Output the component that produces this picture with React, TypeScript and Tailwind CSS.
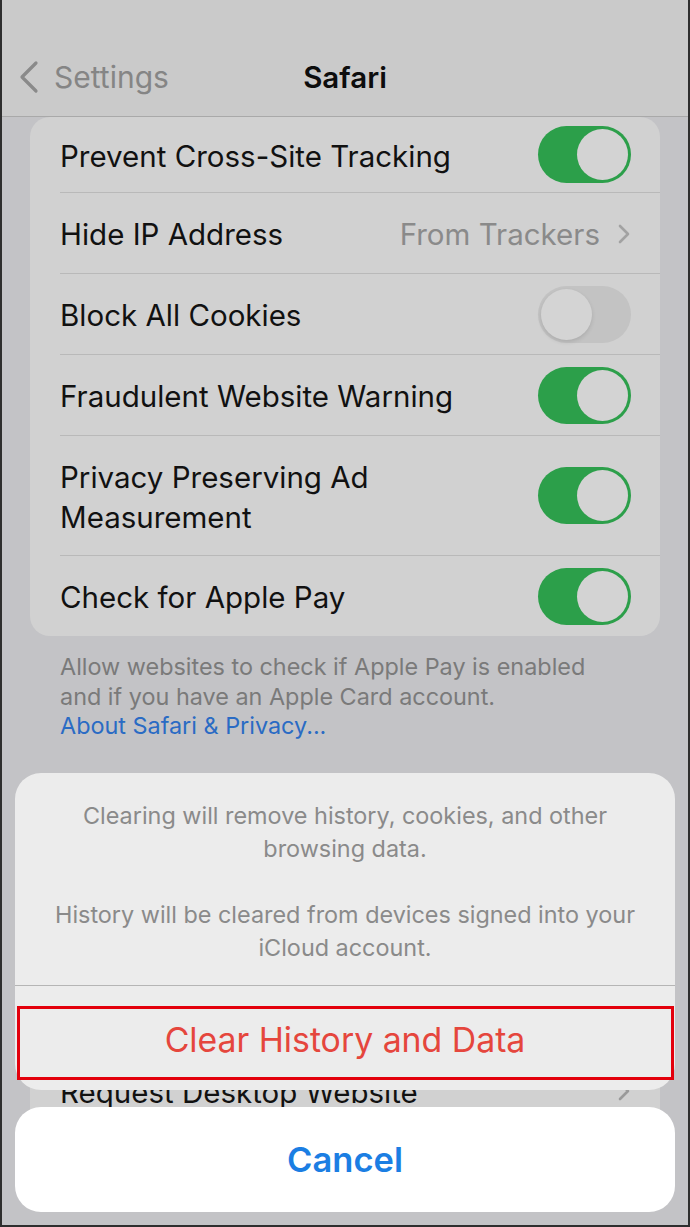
import React from "react";

const font = { fontFamily: "Inter, 'Liberation Sans', Arial, sans-serif" };

function Toggle({ on }: { on: boolean }) {
  if (on) {
    return (
      <div className="w-[93px] h-[57px] rounded-full bg-[#2c9f4a] flex items-center justify-end pr-[3px] shrink-0">
        <div className="w-[51px] h-[51px] rounded-full bg-[#d3d3d3]" />
      </div>
    );
  }
  return (
    <div className="w-[93px] h-[57px] rounded-full bg-[#c3c3c3] flex items-center justify-start pl-[3px] shrink-0">
      <div className="w-[51px] h-[51px] rounded-full bg-[#d4d4d4] shadow-[0_2px_4px_rgba(0,0,0,0.12)]" />
    </div>
  );
}

function Chevron({ color = "#9a9a9a" }: { color?: string }) {
  return (
    <svg width="14" height="22" viewBox="0 0 14 22" className="shrink-0">
      <polyline points="3,3 11,11 3,19" fill="none" stroke={color} strokeWidth="2.6" strokeLinecap="round" strokeLinejoin="round" />
    </svg>
  );
}

function Row({
  children,
  right,
  h,
  first,
}: {
  children: React.ReactNode;
  right: React.ReactNode;
  h: string;
  first?: boolean;
}) {
  return (
    <div className={`pl-[30px] ${h}`}>
      <div className={`h-full flex items-center justify-between pr-[29px] ${first ? "" : "border-t border-[#b9b9b9]"}`}>
        <div className="text-[29.5px] leading-[36px] text-[#111] pt-[2px]">{children}</div>
        {right}
      </div>
    </div>
  );
}

export default function App() {
  return (
    <div
      className="w-[690px] h-[1227px] relative overflow-hidden bg-[#c3c3c6] border-l-2 border-r-2 border-b-2 border-[#2e2e2e] flex flex-col"
      style={font}
    >
      {/* Nav bar */}
      <div className="h-[117px] shrink-0 bg-[#cacaca] border-b border-[#a9a9a9] flex items-end">
        <div className="h-[78px] w-full grid grid-cols-[1fr_auto_1fr] items-center">
          <div className="flex items-center gap-[14px] pl-[16px]">
            <svg width="22" height="34" viewBox="0 0 22 34">
              <polyline points="18,3 4,17 18,31" fill="none" stroke="#8a8a8a" strokeWidth="3.2" strokeLinecap="round" strokeLinejoin="round" />
            </svg>
            <span className="text-[30px] text-[#858585]">Settings</span>
          </div>
          <div className="text-[29.5px] font-semibold text-[#0d0d0d]">Safari</div>
          <div />
        </div>
      </div>

      {/* First card */}
      <div className="mx-[28px] bg-[#d1d1d1] rounded-[20px] flex flex-col">
        <Row h="h-[75px]" first right={<Toggle on />}>
          Prevent Cross-Site Tracking
        </Row>
        <Row
          h="h-[81px]"
          right={
            <div className="flex items-center gap-[17px] pt-[2px]">
              <span className="text-[29.5px] text-[#8a8a8a]">From Trackers</span>
              <Chevron color="#a2a2a2" />
            </div>
          }
        >
          Hide IP Address
        </Row>
        <Row h="h-[81px]" right={<Toggle on={false} />}>
          Block All Cookies
        </Row>
        <Row h="h-[81px]" right={<Toggle on />}>
          Fraudulent Website Warning
        </Row>
        <Row h="h-[120px]" right={<Toggle on />}>
          <div className="leading-[40px]">
            Privacy Preserving Ad
            <br />
            Measurement
          </div>
        </Row>
        <Row h="h-[81px]" right={<Toggle on />}>
          Check for Apple Pay
        </Row>
      </div>

      {/* Footer */}
      <div className="mx-[28px] px-[30px] pt-[16px] text-[23.4px] leading-[29.5px] text-[#7a7a7a]">
        <p>Allow websites to check if Apple Pay is enabled</p>
        <p>and if you have an Apple Card account.</p>
        <p className="text-[#2a6bc4]">About Safari &amp; Privacy...</p>
      </div>

      {/* Second card (behind sheet) */}
      <div className="mx-[28px] mt-[66px] bg-[#d1d1d1] rounded-[20px] flex flex-col">
        <Row h="h-[81px]" first right={<Chevron />}>
          Page Zoom
        </Row>
        <Row h="h-[81px]" right={<Chevron />}>
          Reader
        </Row>
        <Row h="h-[81px]" right={<Chevron />}>
          Camera
        </Row>
        <Row h="h-[81px]" right={<Chevron />}>
          Request Desktop Website
        </Row>
        <Row h="h-[81px]" right={<Chevron />}>
          Microphone
        </Row>
      </div>

      {/* Action sheet */}
      <div className="absolute left-[13px] top-[773px] w-[660px] bg-[#ececec] rounded-[26px]">
        <div className="px-[20px] pt-[26px] pb-[21px] text-center text-[23.4px] leading-[33px] text-[#8a8a8a]">
          <p>
            Clearing will remove history, cookies, and other
            <br />
            browsing data.
          </p>
          <p className="mt-[33px]">
            History will be cleared from devices signed into your
            <br />
            iCloud account.
          </p>
        </div>
        <div className="border-t border-[#b5b5b5] h-[105px] flex items-center justify-center">
          <span className="text-[33.8px] text-[#e5463d] pt-[4px]">Clear History and Data</span>
        </div>
        <div className="absolute left-[2px] top-[233px] w-[657px] h-[74px] border-[3px] border-[#e3000b]" />
      </div>

      {/* Cancel */}
      <div className="absolute left-[13px] top-[1107px] w-[660px] h-[105px] bg-white rounded-[26px] flex items-center justify-center">
        <span className="text-[34.5px] font-semibold text-[#1b7ee3]">Cancel</span>
      </div>
    </div>
  );
}
